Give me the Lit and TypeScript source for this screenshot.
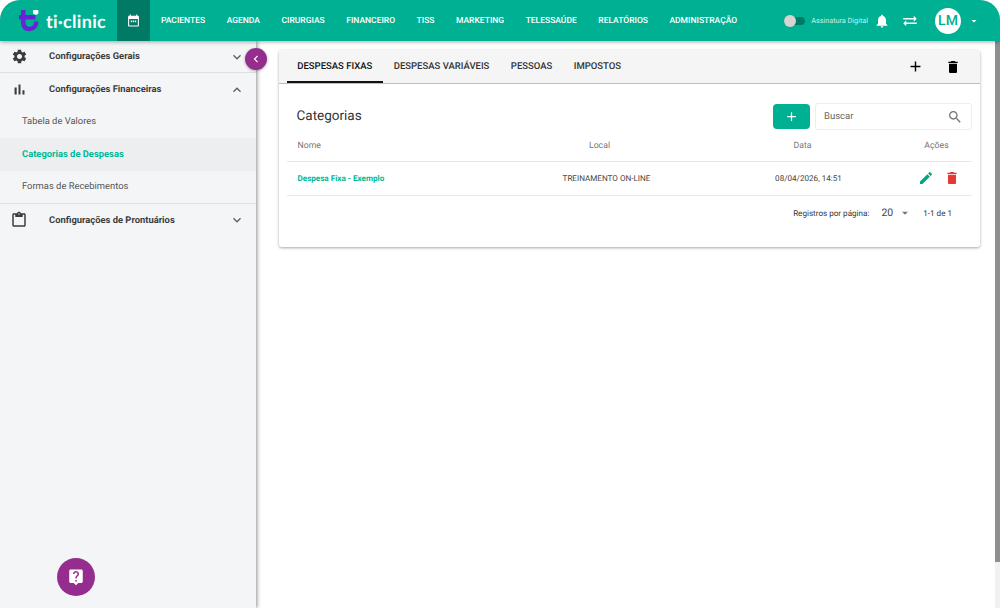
import { LitElement, css, html, svg } from 'lit'
import { customElement } from 'lit/decorators.js'

const icon = (d: string, size = 16, color = 'currentColor') => html`
  <svg width=${size} height=${size} viewBox="0 0 24 24" fill=${color}>${svg`<path d=${d}></path>`}</svg>
`

const ICONS = {
  calendar: 'M20 3h-1V1h-2v2H7V1H5v2H4c-1.100 0-2 .9-2 2v16c0 1.100.9 2 2 2h16c1.100 0 2-.9 2-2V5c0-1.100-.9-2-2-2zm0 18H4V9h16v12zM7 12h2.500v3H7zm3.750 0h2.500v3h-2.500zm3.750 0H17v3h-2.500z',
  bell: 'M12 22c1.1 0 2-.9 2-2h-4c0 1.1.9 2 2 2zm6-6v-5c0-3.07-1.63-5.64-4.5-6.32V4c0-.83-.67-1.5-1.5-1.5s-1.5.67-1.5 1.5v.68C7.64 5.36 6 7.92 6 11v5l-2 2v1h16v-1l-2-2z',
  swap: 'M6.99 11 3 15l3.99 4v-3H21v-2H6.99v-3zM21 9l-3.99-4v3H3v2h14.010v3L21 9z',
  caret: 'M7 10l5 5 5-5z',
  gear: 'M19.14 12.94c.04-.3.06-.61.06-.94 0-.32-.02-.64-.07-.94l2.03-1.58c.18-.14.23-.41.12-.61l-1.92-3.32c-.12-.22-.37-.29-.59-.22l-2.39.96c-.5-.38-1.03-.7-1.62-.94l-.36-2.54c-.04-.24-.24-.41-.48-.41h-3.84c-.24 0-.43.17-.47.41l-.36 2.54c-.59.24-1.13.57-1.62.94l-2.39-.96c-.22-.08-.47 0-.59.22L2.74 8.87c-.12.21-.08.47.12.61l2.03 1.58c-.05.3-.09.63-.09.94s.02.64.07.94l-2.03 1.58c-.18.14-.23.41-.12.61l1.92 3.32c.12.22.37.29.59.22l2.39-.96c.5.38 1.03.7 1.62.94l.36 2.54c.05.24.24.41.48.41h3.84c.24 0 .44-.17.47-.41l.36-2.54c.59-.24 1.13-.56 1.62-.94l2.39.96c.22.08.47 0 .59-.22l1.92-3.32c.12-.22.07-.47-.12-.61l-2.01-1.58zM12 15.6c-1.98 0-3.6-1.62-3.6-3.6s1.62-3.6 3.6-3.6 3.6 1.62 3.6 3.6-1.62 3.6-3.6 3.6z',
  bars: 'M5 9.2h3V19H5zM10.600 5h2.800v14h-2.800zm5.600 8H19v6h-2.800z',
  clipboard: 'M19 3h-4.180C14.400 1.840 13.300 1 12 1s-2.400.84-2.820 2H5c-1.100 0-2 .9-2 2v14c0 1.100.9 2 2 2h14c1.100 0 2-.9 2-2V5c0-1.100-.9-2-2-2zm-7 0c.55 0 1 .45 1 1s-.45 1-1 1-1-.45-1-1 .45-1 1-1zm7 16H5V5h2v3h10V5h2v14z',
  down: 'M7.41 8.59 12 13.17l4.59-4.58L18 10l-6 6-6-6z',
  up: 'M7.41 15.41 12 10.83l4.59 4.58L18 14l-6-6-6 6z',
  left: 'M15.41 7.41 14 6l-6 6 6 6 1.41-1.41L10.83 12z',
  plus: 'M19 13h-6v6h-2v-6H5v-2h6V5h2v6h6v2z',
  trash: 'M6 19c0 1.1.9 2 2 2h8c1.1 0 2-.9 2-2V7H6v12zM19 4h-3.5l-1-1h-5l-1 1H5v2h14V4z',
  pencil: 'M3 17.25V21h3.75L17.81 9.94l-3.75-3.75L3 17.25zM20.71 7.04c.39-.39.39-1.02 0-1.41l-2.34-2.34c-.39-.39-1.02-.39-1.41 0l-1.83 1.83 3.75 3.75 1.83-1.83z',
  search: 'M15.5 14h-.79l-.28-.27C15.41 12.59 16 11.11 16 9.5 16 5.91 13.09 3 9.5 3S3 5.91 3 9.5 5.91 16 9.5 16c1.61 0 3.09-.59 4.23-1.57l.27.28v.79l5 4.99L20.49 19l-4.99-5zm-6 0C7.01 14 5 11.99 5 9.5S7.01 5 9.5 5 14 7.01 14 9.5 11.99 14 9.5 14z',
  help: 'M19 2H5c-1.100 0-2 .9-2 2v14c0 1.100.9 2 2 2h4l3 3 3-3h4c1.100 0 2-.9 2-2V4c0-1.100-.9-2-2-2zm-6 16h-2v-2h2v2zm2.070-7.750-.9.92C13.450 11.900 13 12.500 13 14h-2v-.5c0-1.100.45-2.100 1.170-2.830l1.240-1.260c.37-.36.59-.86.59-1.410 0-1.100-.9-2-2-2s-2 .9-2 2H8c0-2.210 1.790-4 4-4s4 1.790 4 4c0 .88-.36 1.680-.93 2.250z',
}

const NAV = ['PACIENTES', 'AGENDA', 'CIRURGIAS', 'FINANCEIRO', 'TISS', 'MARKETING', 'TELESSAÚDE', 'RELATÓRIOS', 'ADMINISTRAÇÃO']
const TABS = ['DESPESAS FIXAS', 'DESPESAS VARIÁVEIS', 'PESSOAS', 'IMPOSTOS']

@customElement('app-root')
export class AppRoot extends LitElement {
  static styles = css`
    :host {
      display: block;
      width: 1000px;
      height: 608px;
      background: #fff;
      font-family: Roboto, "Liberation Sans", sans-serif;
      text-rendering: geometricPrecision;
    }
    .app {
      width: 1000px;
      height: 608px;
      display: flex;
      flex-direction: column;
      overflow: hidden;
      border-radius: 20px 20px 0 0;
      background: #fff;
    }
    .topbar {
      position: relative;
      z-index: 3;
      flex: none;
      height: 41px;
      display: flex;
      align-items: center;
      background: #00b092;
      color: #fff;
      box-shadow: 0 1px 4px rgba(0, 0, 0, 0.35);
    }
    .logo {
      width: 117px;
      height: 100%;
      display: flex;
      align-items: center;
      padding-left: 18px;
      box-sizing: border-box;
      gap: 6px;
    }
    .logo svg {
      display: block;
      flex: none;
    }
    .logo span {
      font-family: Lato, sans-serif;
      font-weight: 700;
      font-size: 18px;
      letter-spacing: 0.3px;
    }
    .cal {
      width: 33px;
      height: 100%;
      display: flex;
      align-items: center;
      justify-content: center;
      background: #007a65;
    }
    .nav {
      display: flex;
      gap: 21.5px;
      margin-left: 11px;
      font-size: 8.5px;
      font-weight: 500;
      white-space: nowrap;
    }
    .right {
      margin-left: auto;
      display: flex;
      align-items: center;
      padding-right: 20px;
    }
    .switch {
      position: relative;
      width: 21px;
      height: 8px;
      border-radius: 4px;
      background: #007a65;
      margin-right: 6px;
    }
    .switch::before {
      content: '';
      position: absolute;
      left: 0;
      top: -2px;
      width: 12px;
      height: 12px;
      border-radius: 50%;
      background: #d9d4d4;
    }
    .sign {
      font-size: 7.25px;
      color: #cdeee7;
      margin-right: 6px;
    }
    .right svg {
      display: block;
    }
    .swap {
      margin-left: 11px;
      margin-right: 16px;
    }
    .avatar {
      width: 26px;
      height: 26px;
      border-radius: 50%;
      background: #fff;
      color: #00b092;
      font-size: 14px;
      font-weight: 500;
      display: flex;
      align-items: center;
      justify-content: center;
      margin-right: 7px;
    }
    .body {
      position: relative;
      flex: 1;
      display: flex;
      min-height: 0;
    }
    .side {
      position: relative;
      z-index: 2;
      flex: none;
      width: 256px;
      background: #f4f5f7;
      box-shadow: 1px 0 4px rgba(0, 0, 0, 0.45);
      color: #424242;
    }
    .group {
      height: 32.4px;
      display: flex;
      align-items: center;
      box-sizing: border-box;
      padding: 0 11px 0 10px;
      font-size: 9.4px;
      font-weight: 700;
      border-bottom: 1px solid #e0e0e0;
      color: #3c3c3c;
    }
    .group.open,
    .group.last {
      border-bottom: none;
    }
    .group .lead {
      width: 18px;
      margin-right: 21px;
      display: flex;
      justify-content: center;
    }
    .group .chev {
      margin-left: auto;
      display: block;
      line-height: 0;
      color: #616161;
    }
    .sub {
      height: 32.4px;
      display: flex;
      align-items: center;
      padding-left: 22px;
      font-size: 9.4px;
      color: #555;
    }
    .sub.active {
      background: #edeef0;
      color: #00b896;
      font-weight: 700;
    }
    .sub.end {
      border-bottom: 1px solid #e0e0e0;
    }
    .collapse {
      position: absolute;
      z-index: 3;
      left: 245px;
      top: 7px;
      width: 22px;
      height: 22px;
      border-radius: 50%;
      background: #952d8f;
      color: #fff;
      display: flex;
      align-items: center;
      justify-content: center;
      box-shadow: 0 1px 3px rgba(0, 0, 0, 0.3);
    }
    .fab {
      position: absolute;
      left: 57px;
      bottom: 12px;
      width: 38px;
      height: 38px;
      border-radius: 50%;
      background: #952d8f;
      color: #fff;
      display: flex;
      align-items: center;
      justify-content: center;
    }
    .main {
      flex: 1;
      min-width: 0;
      padding: 9px 15px 0 22.5px;
    }
    .card {
      height: 197px;
      border-radius: 3px;
      background: #fff;
      box-shadow: 0 1px 3px rgba(0, 0, 0, 0.35);
    }
    .tabbar {
      height: 33px;
      display: flex;
      align-items: stretch;
      padding: 0 19px 0 8px;
      background: #f5f5f5;
      border-bottom: 1px solid #bdbdbd;
      border-radius: 3px 3px 0 0;
    }
    .tab {
      padding: 0 10.75px;
      display: flex;
      align-items: center;
      font-size: 9.5px;
      font-weight: 500;
      color: #333;
      white-space: nowrap;
    }
    .tab.active {
      color: #111;
      box-shadow: inset 0 -2px 0 #111;
    }
    .tools {
      margin-left: auto;
      display: flex;
      align-items: center;
      gap: 21px;
      color: #000;
    }
    .tools svg {
      display: block;
    }
    .head {
      display: flex;
      align-items: center;
      padding: 19px 8px 0 18px;
    }
    .head h2 {
      margin: 0 0 1px;
      flex: 1;
      font-size: 13.5px;
      font-weight: 400;
      color: #333;
    }
    .add {
      width: 37px;
      height: 25px;
      border-radius: 4px;
      background: #00b092;
      color: #fff;
      display: flex;
      align-items: center;
      justify-content: center;
      margin-right: 5px;
    }
    .search {
      width: 157px;
      height: 27px;
      box-sizing: border-box;
      border: 1px solid #eee;
      border-radius: 3px;
      display: flex;
      align-items: center;
      justify-content: space-between;
      padding: 0 8px;
      font-size: 9.5px;
      color: #666;
    }
    .row {
      display: grid;
      align-items: center;
      margin: 0 8px;
      font-size: 8.1px;
      color: #444;
      border-bottom: 1px solid #e8e8e8;
    }
    .row.hd {
      grid-template-columns: 208px 210px 196px 72px;
      height: 31px;
      font-size: 8.7px;
      color: #777;
    }
    .row.item {
      grid-template-columns: 214px 212px 192px 68px;
      height: 32.5px;
    }
    .row > div {
      text-align: center;
    }
    .row > div:first-child {
      padding-left: 11px;
      text-align: left;
    }
    .row .name {
      font-weight: 700;
      color: #00b896;
    }
    .acts {
      display: flex;
      justify-content: center;
      gap: 10px;
    }
    .acts svg {
      display: block;
    }
    .pager {
      display: flex;
      align-items: center;
      justify-content: flex-end;
      height: 34px;
      padding-right: 28px;
      font-size: 8.1px;
      color: #333;
    }
    .pager b {
      font-weight: 400;
      font-size: 10.5px;
      color: #444;
      margin-left: 12px;
    }
    .pager svg {
      margin: 0 11px 0 5px;
      color: #757575;
    }
    .scroll {
      flex: none;
      width: 5px;
      align-self: stretch;
      background: #f1f1f1;
    }
    .scroll div {
      height: 521px;
      background: #8f8f8f;
    }
  `

  render() {
    return html`
      <div class="app">
        <header class="topbar">
          <div class="logo">
            <svg width="22" height="22" viewBox="0 0 22 22">
              <path d="M5.200 0V12C5.200 17 8 19 11.500 19C15.500 19 18.300 15.800 18.300 11.500M1 7.200H17.500" fill="none" stroke="#6a22d6" stroke-width="4.500"></path>
              <circle cx="17.700" cy="2" r="2.800" fill="#fff"></circle>
            </svg>
            <span>ti·clinic</span>
          </div>
          <div class="cal">${icon(ICONS.calendar, 13)}</div>
          <nav class="nav">${NAV.map(n => html`<span>${n}</span>`)}</nav>
          <div class="right">
            <div class="switch"></div>
            <span class="sign">Assinatura Digital</span>
            ${icon(ICONS.bell, 16)}
            <span class="swap">${icon(ICONS.swap, 18)}</span>
            <div class="avatar">LM</div>
            ${icon(ICONS.caret, 12)}
          </div>
        </header>
        <div class="body">
          <aside class="side">
            <div class="group">
              <span class="lead">${icon(ICONS.gear, 17)}</span>Configurações Gerais
              <span class="chev">${icon(ICONS.down, 16)}</span>
            </div>
            <div class="group open">
              <span class="lead">${icon(ICONS.bars, 17)}</span>Configurações Financeiras
              <span class="chev">${icon(ICONS.up, 16)}</span>
            </div>
            <div class="sub">Tabela de Valores</div>
            <div class="sub active">Categorias de Despesas</div>
            <div class="sub end">Formas de Recebimentos</div>
            <div class="group last">
              <span class="lead">${icon(ICONS.clipboard, 18)}</span>Configurações de Prontuários
              <span class="chev">${icon(ICONS.down, 16)}</span>
            </div>
            <div class="fab">${icon(ICONS.help, 18)}</div>
          </aside>
          <div class="collapse">${icon(ICONS.left, 14)}</div>
          <main class="main">
            <section class="card">
              <div class="tabbar">
                ${TABS.map((t, i) => html`<div class="tab ${i === 0 ? 'active' : ''}">${t}</div>`)}
                <div class="tools">
                  ${icon(ICONS.plus, 17)}
                  ${icon(ICONS.trash, 16)}
                </div>
              </div>
              <div class="head">
                <h2>Categorias</h2>
                <div class="add">${icon(ICONS.plus, 15)}</div>
                <div class="search"><span>Buscar</span>${icon(ICONS.search, 16, '#757575')}</div>
              </div>
              <div class="row hd">
                <div>Nome</div><div>Local</div><div>Data</div><div>Ações</div>
              </div>
              <div class="row item">
                <div class="name">Despesa Fixa - Exemplo</div>
                <div>TREINAMENTO ON-LINE</div>
                <div>08/04/2026, 14:51</div>
                <div class="acts">${icon(ICONS.pencil, 16, '#00a884')}${icon(ICONS.trash, 16, '#e53935')}</div>
              </div>
              <div class="pager">
                <span>Registros por página:</span>
                <b>20</b>
                ${icon(ICONS.caret, 14)}
                <span>1-1 de 1</span>
              </div>
            </section>
          </main>
          <div class="scroll"><div></div></div>
        </div>
      </div>
    `
  }
}
